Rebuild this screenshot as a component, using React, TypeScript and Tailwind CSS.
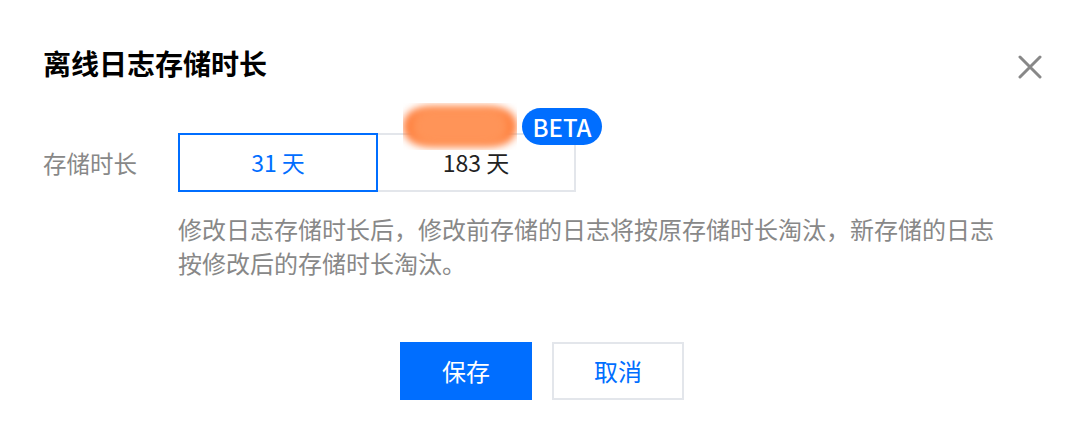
import React from "react";

export default function App() {
  return (
    <div
      className="w-[1084px] h-[440px] bg-white overflow-hidden"
      style={{ fontFamily: '"Noto Sans CJK SC", "Noto Sans", sans-serif' }}
    >
      <div className="flex items-start justify-between pl-[43px] pr-[42px] pt-[45px]">
        <h1 className="text-[28px] leading-[36px] font-bold text-black">离线日志存储时长</h1>
        <svg width="24" height="24" viewBox="0 0 24 24" className="mt-[10px]">
          <path d="M2 2 L22 22 M22 2 L2 22" stroke="#888888" strokeWidth="3" strokeLinecap="round" fill="none" />
        </svg>
      </div>

      <div className="flex items-center mt-[52px] pl-[43px]">
        <div className="w-[135px] text-[23.5px] leading-[32px] text-[#888888]">存储时长</div>
        <div className="flex">
          <button className="w-[200px] h-[59px] border-2 border-[#006eff] text-[#006eff] text-[23px] flex items-center justify-center bg-white">
            31 天
          </button>
          <div className="relative">
            <button className="w-[198px] h-[59px] border-2 border-l-0 border-[#e3e6eb] text-[#222222] text-[23px] flex items-center justify-center bg-white">
              183 天
            </button>
            <div className="absolute left-[25px] top-[-30px] w-[114px] h-[47px] overflow-hidden">
              <div className="absolute left-[0px] right-[0px] top-[6px] bottom-[6px] rounded-full bg-[#ff7a36] blur-[4px]" />
              <div className="absolute left-[8px] right-[8px] top-[4px] bottom-[4px] rounded-[20px] bg-[#ff9458] blur-[5px]" />
            </div>
            <div className="absolute left-[144px] top-[-25px] w-[80px] h-[37px] rounded-full bg-[#006eff] text-white text-[24px] leading-[37px] text-center font-medium">
              BETA
            </div>
          </div>
        </div>
      </div>

      <p className="ml-[178px] mt-[20px] w-[824px] text-[24px] leading-[34px] text-[#888888]">
        修改日志存储时长后，修改前存储的日志将按原存储时长淘汰，新存储的日志按修改后的存储时长淘汰。
      </p>

      <div className="flex justify-center gap-[20px] mt-[62px]">
        <button className="w-[132px] h-[58px] bg-[#006eff] text-white text-[24px] flex items-center justify-center">
          保存
        </button>
        <button className="w-[132px] h-[58px] border-2 border-[#e3e6eb] bg-white text-[#006eff] text-[24px] flex items-center justify-center">
          取消
        </button>
      </div>
    </div>
  );
}
